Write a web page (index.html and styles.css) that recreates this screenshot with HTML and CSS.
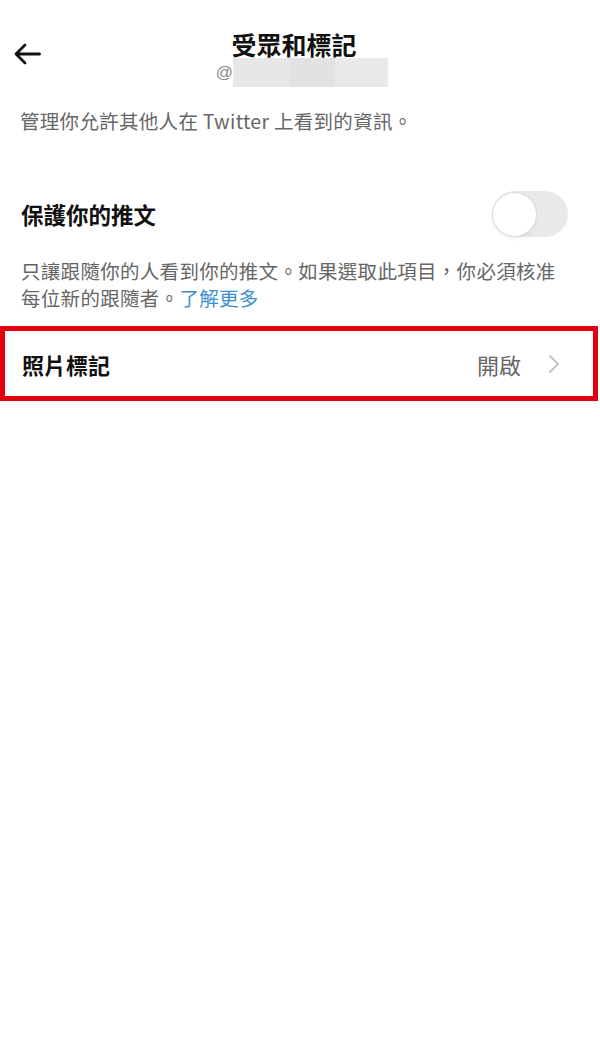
FILE: index.html
```html
<!DOCTYPE html>
<html lang="zh-TW">
<head>
  <meta charset="UTF-8" />
  <title>受眾和標記</title>
  <link rel="stylesheet" href="styles.css">
</head>
<body>
  <header class="topbar">
    <button class="back" aria-label="返回">
      <svg width="28" height="22" viewBox="0 0 28 22">
        <path d="M26.5 11H3M12 2L3 11l9 9" fill="none" stroke="#111" stroke-width="2.8" stroke-linecap="round" stroke-linejoin="round"/>
      </svg>
    </button>
    <div class="title-block">
      <h1>受眾和標記</h1>
      <div class="handle"><span class="at">@</span><span class="mask"></span></div>
    </div>
  </header>

  <p class="intro">管理你允許其他人在 Twitter 上看到的資訊。</p>

  <section class="setting">
    <div class="setting-row">
      <h2>保護你的推文</h2>
      <div class="switch" role="switch" aria-checked="false"><span class="knob"></span></div>
    </div>
    <p class="setting-desc">只讓跟隨你的人看到你的推文。如果選取此項目，你必須核准每位新的跟隨者。<a href="#">了解更多</a></p>
  </section>

  <a class="nav-row" href="#">
    <span class="nav-label">照片標記</span>
    <span class="nav-value">開啟</span>
    <svg class="chevron" width="12" height="20" viewBox="0 0 12 20">
      <polyline points="2,2 10,10 2,18" fill="none" stroke="#c3c3c6" stroke-width="1.8" stroke-linecap="round" stroke-linejoin="round"/>
    </svg>
  </a>
</body>
</html>
```

FILE: styles.css
```css
body {
  margin: 0;
  background: #fff;
  color: #111;
  font-family: "Noto Sans CJK TC", "Noto Sans", sans-serif;
}
.topbar {
  display: grid;
  grid-template-columns: 60px 1fr 60px;
  padding-top: 30px;
}
.back {
  align-self: start;
  justify-self: start;
  margin: 13px 0 0 13px;
  padding: 0;
  border: none;
  background: none;
  line-height: 0;
}
.title-block {
  display: flex;
  flex-direction: column;
  align-items: center;
}
h1 {
  margin: 0;
  padding-right: 12px;
  font-size: 25px;
  line-height: 28px;
  font-weight: bold;
}
.handle {
  display: flex;
  align-items: center;
  padding-left: 4px;
  height: 29px;
}
.at {
  color: #8a8a8a;
  font-family: "Liberation Sans", sans-serif;
  font-size: 17px;
}
.mask {
  width: 155px;
  height: 29px;
  background: linear-gradient(90deg, #e7e7e9 0 37%, #e2e2e4 37% 66%, #e9e9eb 66%);
}
.intro {
  margin: 21px 0 0;
  padding: 0 20px;
  font-size: 19.5px;
  line-height: 26px;
  letter-spacing: 0.3px;
  color: #666;
}
.setting {
  padding: 0 34px 0 21px;
}
.setting-row {
  display: flex;
  align-items: center;
  justify-content: space-between;
  margin-top: 57px;
  margin-right: -2px;
}
h2 {
  margin: 0;
  font-size: 22.5px;
  font-weight: bold;
}
.switch {
  width: 76px;
  height: 46px;
  border-radius: 23px;
  background: #e9e9eb;
  display: flex;
  align-items: center;
  padding: 0 1px;
  box-sizing: border-box;
}
.knob {
  width: 43px;
  height: 43px;
  border-radius: 50%;
  background: #fff;
  box-shadow: 0 0 0 1px #dcdcde, 0 2px 4px rgba(0, 0, 0, 0.08);
}
.setting-desc {
  margin: 20px 0 0;
  font-size: 19.5px;
  line-height: 27px;
  letter-spacing: 0.3px;
  color: #666;
}
.setting-desc a {
  color: #3d8fcf;
  text-decoration: none;
}
.nav-row {
  display: flex;
  align-items: center;
  width: 598px;
  height: 75px;
  margin-top: 15px;
  padding: 0 33px 0 17px;
  box-sizing: border-box;
  border: 5px solid #e3000f;
  color: #111;
  text-decoration: none;
}
.nav-label {
  flex: 1;
  font-size: 22px;
  font-weight: bold;
}
.nav-value {
  font-size: 22px;
  color: #666;
  margin-right: 27px;
}
```
